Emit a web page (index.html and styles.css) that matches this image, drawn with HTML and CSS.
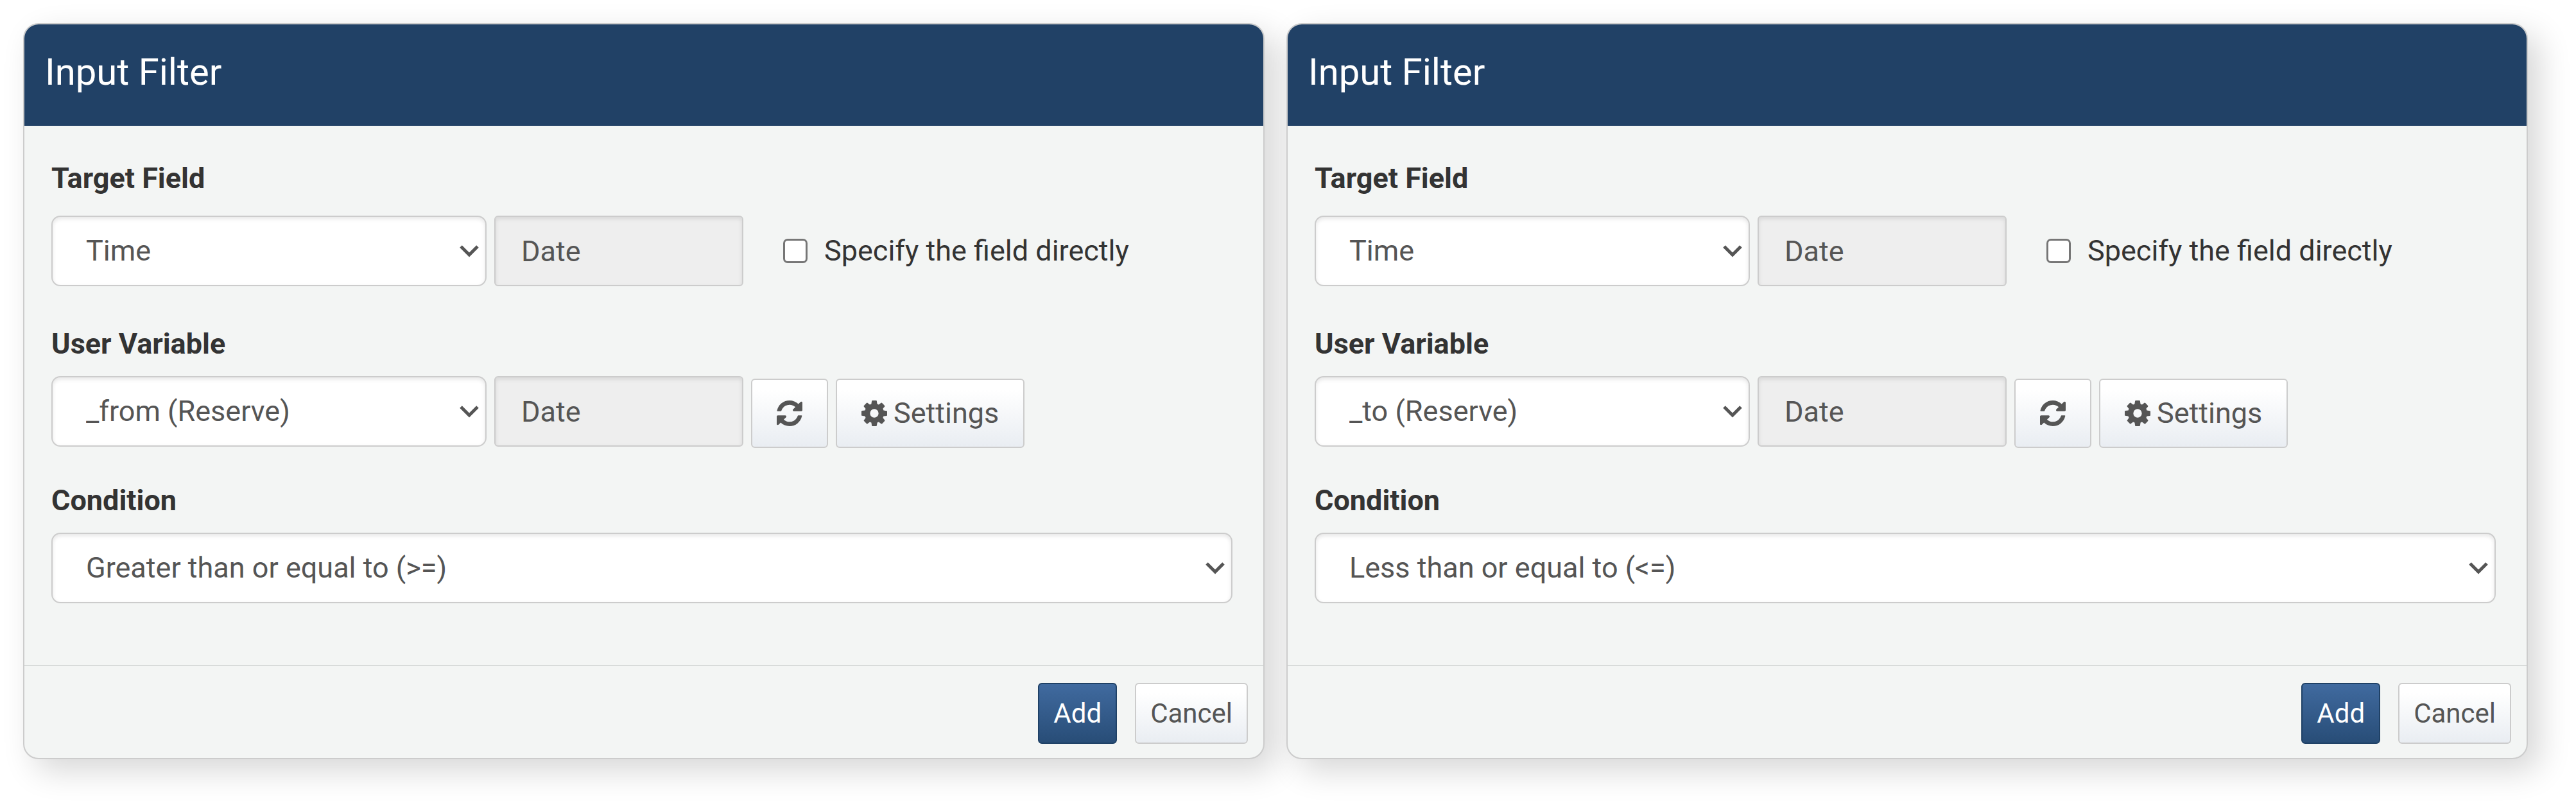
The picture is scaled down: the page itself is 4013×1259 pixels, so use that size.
FILE: index.html
```html
<!DOCTYPE html>
<html lang="en">
	<head>
		<meta charset="utf-8">
		<title>Input Filter</title>
		<meta name="viewport" content="width=device-width, initial-scale=1.0">
		<link rel="stylesheet" href="styles.css">
	</head>
	<body>
		<!-- shared icons -->
		<svg class="sprite" aria-hidden="true">
			<symbol id="refresh" viewBox="0 0 1536 1536">
				<path d="M1511 928q0 5-1 7-64 268-268 434.500T764 1536q-146 0-282.500-55T238 1324l-129 129q-19 19-45 19t-45-19-19-45V960q0-26 19-45t45-19h448q26 0 45 19t19 45-19 45l-137 137q71 66 161 102t187 36q134 0 250-65t186-179q11-17 53-117 8-23 30-23h192q13 0 22.500 9.500t9.500 22.500zm25-800v448q0 26-19 45t-45 19h-448q-26 0-45-19t-19-45 19-45l138-138Q969 256 768 256q-134 0-250 65T332 500q-11 17-53 117-8 23-30 23H50q-13 0-22.500-9.500T18 608v-7q65-268 270-434.500T768 0q146 0 284 55.500T1297 212l130-129q19-19 45-19t45 19 19 45z"/>
			</symbol>
			<symbol id="gear" viewBox="0 0 1536 1536">
				<path d="M1024 768q0-106-75-181t-181-75-181 75-75 181 75 181 181 75 181-75 75-181zm512-109v222q0 12-8 23t-20 13l-185 28q-19 54-39 91 35 50 107 138 10 12 10 25t-9 23q-27 37-99 108t-94 71q-12 0-26-9l-138-108q-44 23-91 38-16 136-29 186-7 28-36 28H657q-14 0-24.500-8.500T621 1506l-28-184q-49-16-90-37l-141 107q-10 9-25 9-14 0-25-11-126-114-165-168-7-10-7-23 0-12 8-23 15-21 51-66.500t54-70.500q-27-50-41-99L29 913q-13-2-21-12.500T0 877V655q0-12 8-23t19-13l186-28q14-46 39-92-40-57-107-138-10-12-10-24 0-10 9-23 26-36 98.500-107.500T337 135q13 0 26 10l138 107q44-23 91-38 16-136 29-186 7-28 36-28h222q14 0 24.500 8.500T915 30l28 184q49 16 90 37l142-107q9-9 24-9 13 0 25 10 129 119 165 170 7 8 7 22 0 12-8 23-15 21-51 66.500t-54 70.500q26 50 41 98l183 28q13 2 21 12.500t8 23.500z"/>
			</symbol>
		</svg>

		<main class="filters">
			<form class="dialog">
				<h2 class="dialog-header">Input Filter</h2>
				<div class="dialog-body">
					<div class="group">
						<label class="title" for="from-field">Target Field</label>
						<div class="row row-field">
							<select class="control" id="from-field">
								<option>Time</option>
							</select>
							<input class="type" type="text" value="Date" aria-label="Field type" readonly>
							<label class="check"><input type="checkbox">Specify the field directly</label>
						</div>
					</div>
					<div class="group">
						<label class="title" for="from-variable">User Variable</label>
						<div class="row">
							<select class="control" id="from-variable">
								<option>_from (Reserve)</option>
							</select>
							<input class="type" type="text" value="Date" aria-label="Variable type" readonly>
							<button class="btn btn-tool" type="button" aria-label="Refresh"><svg class="icon"><use href="#refresh"/></svg></button>
							<button class="btn btn-tool" type="button"><svg class="icon"><use href="#gear"/></svg>Settings</button>
						</div>
					</div>
					<div class="group">
						<label class="title" for="from-condition">Condition</label>
						<select class="control control-wide" id="from-condition">
							<option>Greater than or equal to (&gt;=)</option>
						</select>
					</div>
				</div>
				<div class="dialog-footer">
					<button class="btn btn-primary" type="button">Add</button>
					<button class="btn" type="button">Cancel</button>
				</div>
			</form>

			<form class="dialog">
				<h2 class="dialog-header">Input Filter</h2>
				<div class="dialog-body">
					<div class="group">
						<label class="title" for="to-field">Target Field</label>
						<div class="row row-field">
							<select class="control" id="to-field">
								<option>Time</option>
							</select>
							<input class="type" type="text" value="Date" aria-label="Field type" readonly>
							<label class="check"><input type="checkbox">Specify the field directly</label>
						</div>
					</div>
					<div class="group">
						<label class="title" for="to-variable">User Variable</label>
						<div class="row">
							<select class="control" id="to-variable">
								<option>_to (Reserve)</option>
							</select>
							<input class="type" type="text" value="Date" aria-label="Variable type" readonly>
							<button class="btn btn-tool" type="button" aria-label="Refresh"><svg class="icon"><use href="#refresh"/></svg></button>
							<button class="btn btn-tool" type="button"><svg class="icon"><use href="#gear"/></svg>Settings</button>
						</div>
					</div>
					<div class="group">
						<label class="title" for="to-condition">Condition</label>
						<select class="control control-wide" id="to-condition">
							<option>Less than or equal to (&lt;=)</option>
						</select>
					</div>
				</div>
				<div class="dialog-footer">
					<button class="btn btn-primary" type="button">Add</button>
					<button class="btn" type="button">Cancel</button>
				</div>
			</form>
		</main>
	</body>
</html>
```
FILE: styles.css
```css
* {
	box-sizing: border-box;
}
body {
	margin: 0;
	font-family: Roboto, sans-serif;
	font-size: 45px;
	line-height: 60px;
	color: #333;
	background-color: #FFF;
}
.sprite {
	display: none;
}
.filters {
	display: flex;
	align-items: flex-start;
	gap: 34px;
	padding: 36px 75px 75px 36px;
}

/* dialog */
.dialog {
	flex: 1;
	min-width: 0;
	overflow: hidden;
	border: 2px solid #ccc;
	border-radius: 24px;
	background-color: #f3f5f4;
	box-shadow: 18px 18px 50px rgba(0, 0, 0, .16);
}
.dialog-header {
	margin: 0;
	padding: 34px 32px 44px;
	font-size: 58px;
	font-weight: 400;
	line-height: 80px;
	color: #FFF;
	background-color: #214166;
}
.dialog-body {
	display: flex;
	flex-direction: column;
	gap: 52px;
	padding: 52px 48px 96px 42px;
}
.dialog-footer {
	display: flex;
	justify-content: flex-end;
	gap: 28px;
	padding: 26px 24px 22px;
	border-top: 2px solid #d8dbda;
}

/* fields */
.title {
	display: block;
	margin-bottom: 20px;
	font-weight: 700;
}
.row {
	display: flex;
	flex-wrap: wrap;
	align-items: flex-start;
	gap: 12px;
}
.row-field {
	align-items: center;
	padding: 8px 0;
}
.control, .type {
	height: 110px;
	margin: 0;
	border: 2px solid #ccc;
	font: inherit;
	color: #555;
	box-shadow: inset 0 3px 6px rgba(0, 0, 0, .1);
}
.control {
	width: 678px;
	max-width: 100%;
	padding: 0 60px 0 52px;
	border-radius: 14px;
	appearance: none;
	background: #FFF url("data:image/svg+xml,%3Csvg xmlns='http://www.w3.org/2000/svg' width='30' height='20' fill='none' stroke='%23555' stroke-width='5'%3E%3Cpath d='M2 3l13 13L28 3'/%3E%3C/svg%3E") no-repeat right 10px center;
}
.control-wide {
	display: block;
	width: 100%;
}
.type {
	width: 388px;
	padding: 0 40px;
	border-radius: 6px;
	background-color: #eee;
}
.check {
	display: flex;
	align-items: center;
	gap: 26px;
	margin-left: 50px;
}
.check input {
	width: 38px;
	height: 38px;
	margin: 0;
	border: 3px solid #767676;
	border-radius: 7px;
	appearance: none;
	background-color: #FFF;
}
.check input:checked {
	background-color: #214166;
}

/* buttons */
.btn {
	display: flex;
	align-items: center;
	gap: 10px;
	height: 95px;
	margin: 0;
	padding: 0 22px;
	border: 2px solid #ccc;
	border-radius: 6px;
	font: inherit;
	font-size: 42px;
	color: #555;
	background: linear-gradient(#FFF, #FFF 15%, #e9edf2);
}
.btn-primary {
	border-color: #1f4166;
	color: #FFF;
	background: linear-gradient(#406a9f, #284d77);
}
.btn-tool {
	height: 108px;
	margin-top: 4px;
	padding: 0 38px;
	font-size: 45px;
}
.icon {
	width: 40px;
	height: 40px;
	fill: #555;
}
```
